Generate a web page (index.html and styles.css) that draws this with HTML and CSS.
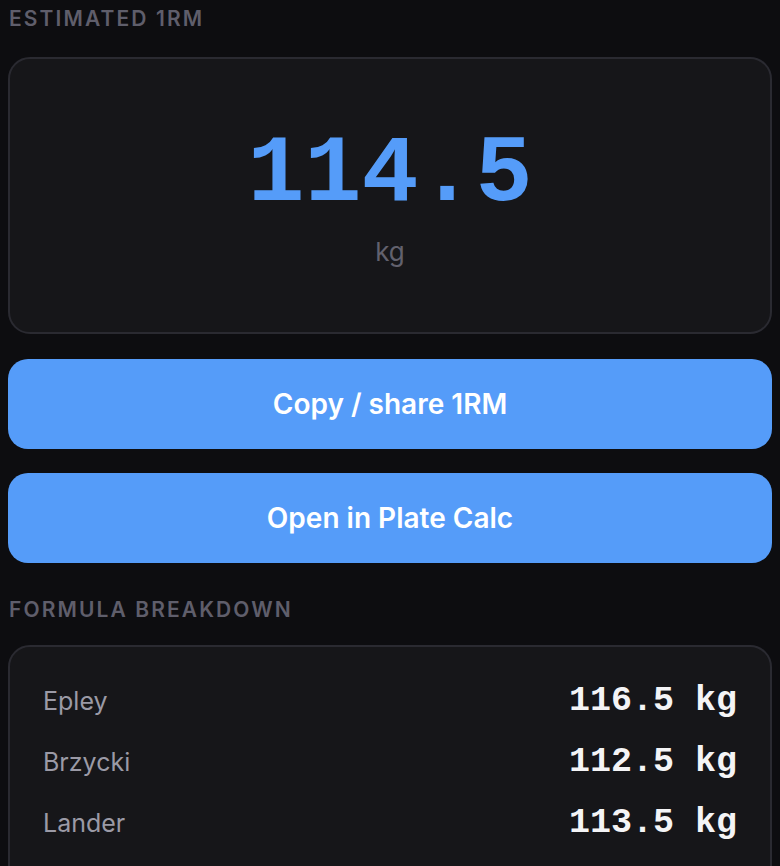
FILE: index.html
```html
<!DOCTYPE html>
<html lang="en">
<head>
<meta charset="utf-8">
<title>1RM Calculator</title>
<link rel="stylesheet" href="styles.css">
</head>
<body>
<main class="screen">
  <h2 class="section-label">Estimated 1RM</h2>
  <section class="card result-card">
    <div class="result-value">114.5</div>
    <div class="result-unit">kg</div>
  </section>
  <button class="action-btn" type="button">Copy / share 1RM</button>
  <button class="action-btn" type="button">Open in Plate Calc</button>
  <h2 class="section-label">Formula breakdown</h2>
  <section class="card formula-card">
    <div class="formula-row"><span class="formula-name">Epley</span><span class="formula-value">116.5 kg</span></div>
    <div class="formula-row"><span class="formula-name">Brzycki</span><span class="formula-value">112.5 kg</span></div>
    <div class="formula-row"><span class="formula-name">Lander</span><span class="formula-value">113.5 kg</span></div>
  </section>
</main>
</body>
</html>
```
FILE: styles.css
```css
* { box-sizing: border-box; }

html, body {
  margin: 0;
  padding: 0;
  background: #0d0d10;
  height: 100%;
  overflow: hidden;
}

body {
  font-family: Inter, "Noto Sans", sans-serif;
  color: #f2f2f5;
}

.screen {
  display: flex;
  flex-direction: column;
  padding: 0 8px;
}

.section-label {
  margin: 0;
  font-size: 21px;
  font-weight: 600;
  letter-spacing: 0.1em;
  text-transform: uppercase;
  color: #5f5e6b;
  line-height: 26px;
  padding: 6px 1px 0;
}

.card {
  background: #161619;
  border: 2px solid #2a2a31;
  border-radius: 22px;
}

.result-card {
  margin-top: 25px;
  height: 277px;
  display: flex;
  flex-direction: column;
  align-items: center;
  padding-top: 63px;
}

.result-value {
  font-family: "Courier New", "Nimbus Mono PS", FreeMono, "Liberation Mono", monospace;
  font-weight: 700;
  font-size: 95px;
  line-height: 106px;
  color: #559cf9;
}

.result-unit {
  margin-top: 9px;
  font-size: 26px;
  line-height: 30px;
  color: #62616d;
}

.action-btn {
  display: block;
  width: 100%;
  height: 90px;
  border: 0;
  border-radius: 20px;
  background: #559cf9;
  color: #ffffff;
  font-family: Inter, "Noto Sans", sans-serif;
  font-size: 28px;
  font-weight: 600;
  margin-top: 25px;
  padding: 0;
}

.action-btn + .action-btn { margin-top: 24px; }

.action-btn + .section-label { margin-top: 28px; }

.formula-card {
  margin-top: 22px;
  padding: 23px 33px 40px;
  display: flex;
  flex-direction: column;
}

.formula-row {
  display: flex;
  justify-content: space-between;
  align-items: center;
  height: 61px;
}

.formula-name {
  font-size: 25px;
  color: #9b9aa6;
}

.formula-value {
  font-family: "Courier New", "Nimbus Mono PS", FreeMono, "Liberation Mono", monospace;
  font-weight: 700;
  font-size: 35px;
  color: #f4f4f6;
}
```
